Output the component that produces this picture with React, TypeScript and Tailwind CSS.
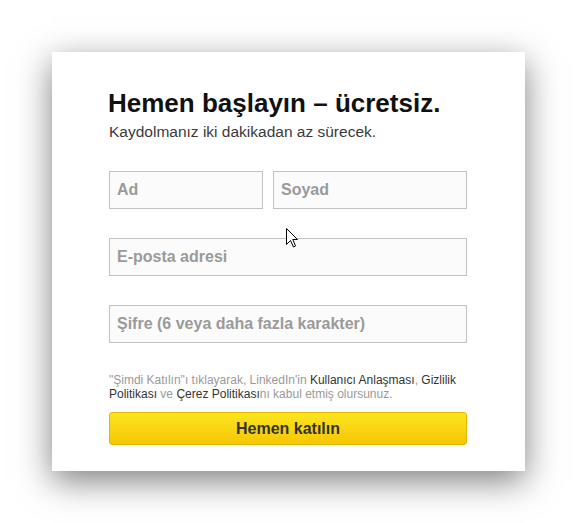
const font = { fontFamily: '"Liberation Sans", Arial, sans-serif' }

function Field({ placeholder, className = '' }: { placeholder: string; className?: string }) {
  return (
    <input
      placeholder={placeholder}
      className={`h-[38px] border border-[#c2c2c2] bg-[#fbfbfb] px-[7px] text-[16px] font-bold text-[#333] placeholder:text-[#9a9a9a] outline-none ${className}`}
    />
  )
}

export default function App() {
  return (
    <div className="min-h-[523px] w-[577px] bg-white pt-[52px] pl-[52px]" style={font}>
      <div className="relative w-[473px] h-[419px] bg-white shadow-[0_10px_32px_rgba(0,0,0,0.5)] pt-[36px] pl-[57px] pr-[58px]">
        <h1 className="text-[26px] leading-[30px] font-bold text-[#111] -ml-px">
          Hemen başlayın – ücretsiz.
        </h1>
        <p className="mt-[4px] text-[15.5px] leading-[20px] text-[#3a3a3a]">
          Kaydolmanız iki dakikadan az sürecek.
        </p>

        <form className="mt-[29px] flex flex-col gap-[29px]" onSubmit={e => e.preventDefault()}>
          <div className="flex gap-[10px]">
            <Field placeholder="Ad" className="w-[154px]" />
            <Field placeholder="Soyad" className="w-[194px]" />
          </div>
          <Field placeholder="E-posta adresi" className="w-[358px]" />
          <Field placeholder="Şifre (6 veya daha fazla karakter)" className="w-[358px]" />
        </form>

        <p className="mt-[30px] text-[12px] leading-[14px] text-[#999]">
          "Şimdi Katılın"ı tıklayarak, LinkedIn'in <span className="text-[#333]">Kullanıcı Anlaşması</span>,{' '}
          <span className="text-[#333]">Gizlilik Politikası</span> ve{' '}
          <span className="text-[#333]">Çerez Politikası</span>nı kabul etmiş olursunuz.
        </p>

        <button className="mt-[11px] w-[358px] h-[33px] rounded-[3px] border border-[#e5b800] bg-gradient-to-b from-[#fae51e] to-[#f6c602] text-[16px] font-bold text-[#333]">
          Hemen katılın
        </button>

        {/* mouse cursor */}
        <svg className="absolute left-[234px] top-[176px]" width="13" height="20" viewBox="0 0 13 20">
          <path d="M0.5 0.5 L0.5 16.5 L4.5 12.5 L7.5 19 L9.5 18 L6.8 11.5 L11.5 11.5 Z" fill="#fff" stroke="#000" strokeWidth="1" strokeLinejoin="miter" />
        </svg>
      </div>
    </div>
  )
}
